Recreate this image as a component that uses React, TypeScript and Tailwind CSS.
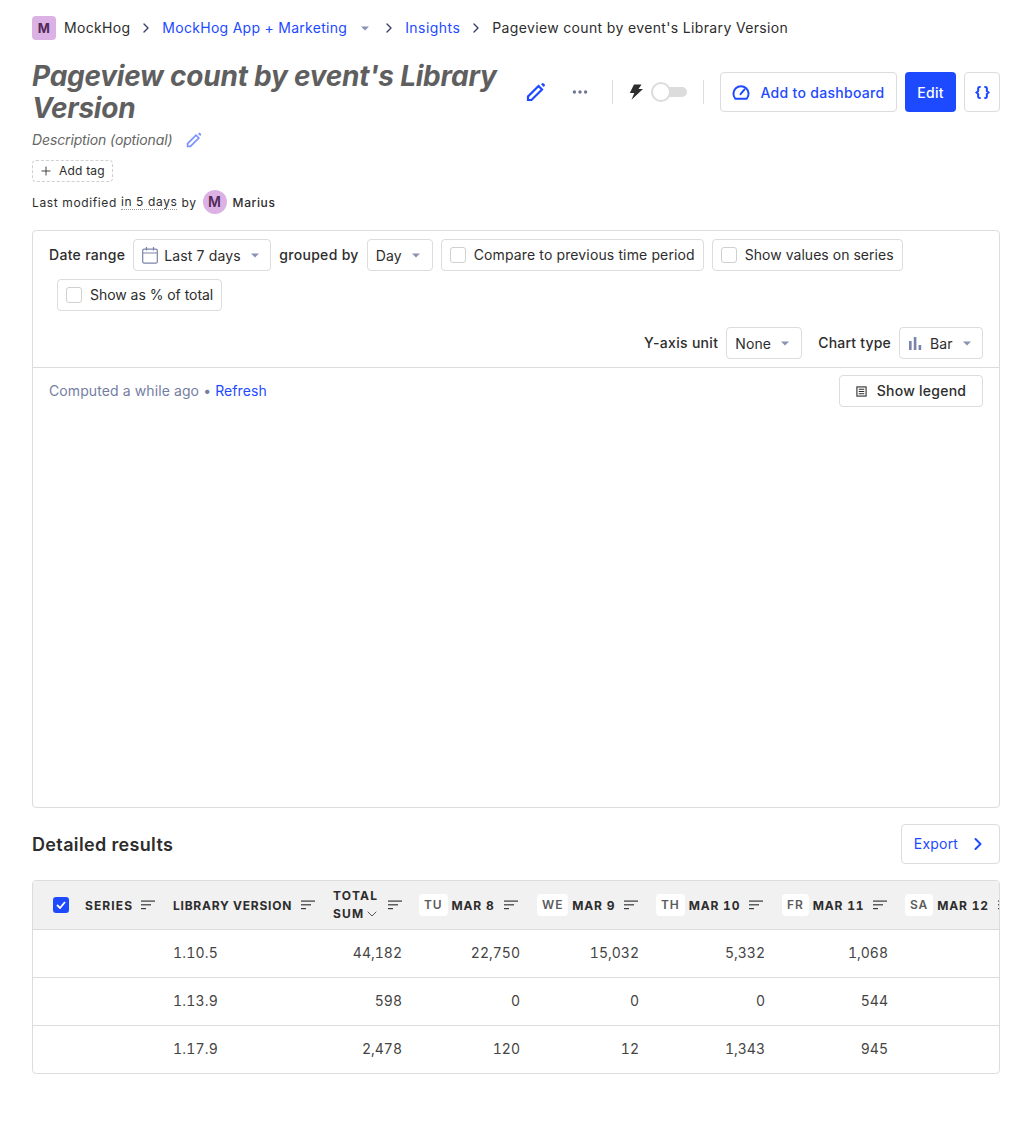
import { ChevronDown, ChevronRight, Plus } from "lucide-react";
import type { ReactNode } from "react";

const BLUE = "text-[#1d4aff]";

function Caret({ className = "" }: { className?: string }) {
  return (
    <svg viewBox="0 0 8 5" className={`h-[5px] w-2 ${className}`} fill="#8b92b0">
      <path d="M0 0.400h8L4 4.600z" />
    </svg>
  );
}

function Crumb() {
  return <ChevronRight className="size-4 text-[#35416b]" strokeWidth={2} />;
}

function EditIcon({ className = "" }: { className?: string }) {
  return (
    <svg viewBox="0 0 20 20" className={className} fill="none">
      <path
        d="M2 18v-3.500L12.500 4l3.500 3.500L5.500 18H2z"
        stroke="currentColor"
        strokeWidth="2.200"
        strokeLinejoin="miter"
      />
      <path d="M15 2.300l.9-.9a1.300 1.300 0 0 1 1.800 0l.9.9a1.300 1.300 0 0 1 0 1.800l-.9.9z" fill="currentColor" />
    </svg>
  );
}

function SortIcon() {
  return (
    <svg viewBox="0 0 14 10" className="h-[10px] w-[14px] shrink-0" fill="#3a3a3a">
      <rect x="0" y="0.5" width="14" height="1.2" />
      <rect x="0" y="4.2" width="10" height="1.2" />
      <rect x="0" y="8" width="5" height="1.2" />
    </svg>
  );
}

function Checkbox() {
  return <span className="size-4 rounded-[3px] border border-[#d0d0d0] bg-white" />;
}

function Box({ children, className = "" }: { children: ReactNode; className?: string }) {
  return (
    <div
      className={`flex h-8 items-center rounded-[4px] border border-[#dcdcdc] bg-white text-sm text-[#2d2d2d] ${className}`}
    >
      {children}
    </div>
  );
}

function CheckOption({ label, className = "" }: { label: string; className?: string }) {
  return (
    <Box className={`w-fit gap-2 pr-2 pl-2 ${className}`}>
      <Checkbox />
      <span>{label}</span>
    </Box>
  );
}

function Label({ children, className = "tracking-[0.3px]" }: { children: ReactNode; className?: string }) {
  return <span className={`text-sm font-medium text-[#2d2d2d] ${className}`}>{children}</span>;
}

function DayColumn({ day, date }: { day: string; date: string }) {
  return (
    <div className="flex items-center gap-1">
      <span className="rounded-[4px] bg-white px-[5px] py-[3px] text-xs font-semibold tracking-[0.9px] text-[#5c5c5c]">
        {day}
      </span>
      <span className="whitespace-nowrap pt-px text-xs font-bold tracking-[0.8px] tabular-nums">{date}</span>
      <span className="ml-[5px]">
        <SortIcon />
      </span>
    </div>
  );
}

const COLUMNS = "grid grid-cols-[40px_88px_160px_87px_118px_119px_126px_123px_130px]";

const ROWS = [
  ["1.10.5", "44,182", "22,750", "15,032", "5,332", "1,068"],
  ["1.13.9", "598", "0", "0", "0", "544"],
  ["1.17.9", "2,478", "120", "12", "1,343", "945"],
];

export default function App() {
  return (
    <main className="min-h-[1138px] bg-white px-8 pt-4 font-['Inter',sans-serif] text-[#2d2d2d]">
      <nav className="flex h-6 items-center text-sm tracking-[0.32px]">
        <span className="flex size-6 items-center justify-center rounded-[4px] bg-[#dcb1e3] text-[13px] font-bold text-[#4f2a5a]">
          M
        </span>
        <span className="ml-2">MockHog</span>
        <span className="mx-2">
          <Crumb />
        </span>
        <span className={`${BLUE} tracking-[0.28px]`}>MockHog App + Marketing</span>
        <Caret className="mr-[4px] ml-[14px]" />
        <span className="mx-2">
          <Crumb />
        </span>
        <span className={`${BLUE} tracking-[0.45px]`}>Insights</span>
        <span className="mx-2">
          <Crumb />
        </span>
        <span className="tracking-[0.35px]">Pageview count by event's Library Version</span>
      </nav>

      <header className="mt-5 flex items-start">
        <h1 className="w-[480px] text-[28px] leading-8 font-bold tracking-[-0.24px] text-[#5f5f5f] italic">
          Pageview count by event's Library Version
        </h1>
        <div className="mt-3 flex h-10 flex-1 items-center">
          <EditIcon className={`ml-[14px] size-5 ${BLUE}`} />
          <svg viewBox="0 0 16 4" className="ml-[26px] h-1 w-4" fill="#6f7794">
            <circle cx="2.4" cy="2" r="1.7" />
            <circle cx="8" cy="2" r="1.7" />
            <circle cx="13.6" cy="2" r="1.7" />
          </svg>
          <span className="ml-6 h-6 w-px bg-[#dcdcdc]" />
          <svg viewBox="0 0 14 16" className="ml-[16px] h-4 w-[14px]" fill="#2d2d2d">
            <path d="M5 0.500h7.500L9.500 5H14L2.500 15.800 5.300 9H0.800z" />
          </svg>
          <span className="relative ml-2 h-[10px] w-9 rounded-full bg-[#dcdcdc]">
            <span className="absolute top-1/2 left-0 size-5 -translate-y-1/2 rounded-full border-2 border-[#dcdcdc] bg-white" />
          </span>
          <span className="ml-4 h-6 w-px bg-[#dcdcdc]" />
          <button className="ml-4 flex h-10 w-[177px] items-center justify-center gap-[10px] rounded-[4px] border border-[#dcdcdc] text-sm font-medium tracking-[0.3px] text-[#1d4aff]">
            <svg viewBox="0 0 20 18" className="h-4 w-[18px]" fill="none" stroke="currentColor" strokeWidth="2.200">
              <path d="M3.500 16.500h13a8.500 8.500 0 1 0-13 0z" strokeLinejoin="round" />
              <path d="M9.500 11.500l4.500-5.500" strokeLinecap="round" />
            </svg>
            <span className="pt-px">Add to dashboard</span>
          </button>
          <button className="ml-2 flex h-10 w-[51px] items-center justify-center rounded-[4px] bg-[#1d4aff] pt-px text-sm font-medium tracking-[0.3px] text-white">
            Edit
          </button>
          <button className="ml-2 flex h-10 w-9 items-center justify-center rounded-[4px] border border-[#dcdcdc]">
            <svg viewBox="0 0 16 14" className="h-[13px] w-[15px]" fill="none" stroke="#1d4aff" strokeWidth="2.200">
              <path d="M6 1.100H4.800A1.500 1.500 0 0 0 3.300 2.600v2.900L1.500 7l1.800 1.500v2.900a1.500 1.500 0 0 0 1.500 1.500H6" />
              <path d="M10 1.100h1.200a1.500 1.500 0 0 1 1.500 1.500v2.900L14.500 7l-1.800 1.500v2.900a1.500 1.500 0 0 1-1.500 1.500H10" />
            </svg>
          </button>
        </div>
      </header>

      <div className="mt-1 flex h-6 items-center text-sm tracking-[-0.13px] text-[#666] italic">
        <span>Description (optional)</span>
        <EditIcon className="ml-[14px] size-4 text-[#7c93ff]" />
      </div>

      <div className="mt-2 flex h-[22px] w-[81px] items-center gap-[6px] rounded-[4px] border border-dashed border-[#d0d0d0] pl-[6px] text-xs tracking-[0.2px]">
        <Plus className="size-[14px]" strokeWidth={1.5} />
        Add tag
      </div>

      <div className="mt-2 flex h-6 items-center pt-px text-xs tracking-[0.62px]">
        <span>Last modified&nbsp;</span>
        <span className="border-b border-dotted border-[#999] leading-[14px]">in 5 days</span>
        <span>&nbsp;by</span>
        <span className="-mt-px mr-[6px] ml-[6px] flex size-6 items-center justify-center rounded-full bg-[#dcb1e3] text-sm font-semibold tracking-normal text-[#4f2a5a]">
          M
        </span>
        <span className="font-medium tracking-[0.6px]">Marius</span>
      </div>

      <section className="mt-4 h-[578px] rounded-[4px] border border-[#dcdcdc]">
        <div className="border-b border-[#dcdcdc] px-4 pt-2 pb-2">
          <div className="flex items-center gap-2">
            <Label>Date range</Label>
            <Box className="w-[138px] pl-2">
              <svg viewBox="0 0 16 17" className="h-[17px] w-4" fill="none" stroke="#7a84a8" strokeWidth="1.2">
                <rect x="0.7" y="2.2" width="14.6" height="14" rx="1.5" />
                <path d="M0.7 6h14.6M4.5 0v3.5M11.5 0v3.5" />
              </svg>
              <span className="ml-[6px] pt-px tracking-[0.13px]">Last 7 days</span>
              <Caret className="ml-[10px]" />
            </Box>
            <Label>grouped by</Label>
            <Box className="w-[66px] pl-2">
              <span className="pt-px tracking-[0.13px]">Day</span>
              <Caret className="ml-[10px]" />
            </Box>
            <CheckOption label="Compare to previous time period" className="tracking-[0.13px]" />
            <CheckOption label="Show values on series" className="tracking-[0.03px]" />
          </div>
          <div className="mt-2 pl-2">
            <CheckOption label="Show as % of total" className="tracking-[-0.04px]" />
          </div>
          <div className="mt-4 flex items-center justify-end gap-2">
            <Label>Y-axis unit</Label>
            <Box className="w-[76px] pl-2">
              <span className="pt-px tracking-[0.13px]">None</span>
              <Caret className="ml-[10px]" />
            </Box>
            <Label className="ml-2 tracking-[0.2px]">Chart type</Label>
            <Box className="w-[84px] pl-2">
              <svg viewBox="0 0 14 14" className="size-[14px]" fill="#7a84a8">
                <rect x="1" y="5" width="2.6" height="9" />
                <rect x="5.8" y="1" width="2.6" height="13" />
                <rect x="10.6" y="9" width="2.6" height="5" />
              </svg>
              <span className="ml-2 pt-px tracking-[0.13px]">Bar</span>
              <Caret className="ml-[10px]" />
            </Box>
          </div>
        </div>
        <div className="flex items-center justify-between px-4 pt-[7px]">
          <p className="text-sm tracking-[0.1px] text-[#747ea2]">
            Computed a while ago • <span className={BLUE}>Refresh</span>
          </p>
          <Box className="w-[144px] justify-center gap-[10px] font-medium tracking-[0.25px]">
            <svg viewBox="0 0 12 12" className="size-[11px]" fill="none" stroke="#2d2d2d" strokeWidth="1.200">
              <rect x="1" y="1" width="10" height="10" />
              <path d="M3 3.500h6M3 6h6M3 8.500h6" />
            </svg>
            Show legend
          </Box>
        </div>
      </section>

      <div className="mt-4 flex h-10 items-center justify-between">
        <h2 className="pt-px text-lg font-semibold tracking-[0.35px]">Detailed results</h2>
        <button className="flex h-10 w-[99px] items-center justify-center gap-[10px] rounded-[4px] border border-[#dcdcdc] text-sm tracking-[0.2px] text-[#1d4aff]">
          Export
          <ChevronRight className="-mr-px size-5" strokeWidth={2.4} />
        </button>
      </div>

      <section className="mt-4 overflow-hidden rounded-[4px] border border-[#dcdcdc]">
        <div className="w-[1100px]">
          <div className={`${COLUMNS} h-[49px] items-center border-b border-[#dcdcdc] bg-[#f1f1f1] text-xs font-bold`}>
            <div className="pl-5">
              <span className="flex size-4 items-center justify-center rounded-[3px] bg-[#1d4aff]">
                <svg viewBox="0 0 10 8" className="h-2 w-[10px]" fill="none" stroke="white" strokeWidth="1.8">
                  <path d="M1 4l3 3 5-6" />
                </svg>
              </span>
            </div>
            <div className="flex items-center gap-2 pl-3 tracking-[1.1px]">
              <span className="pt-px">SERIES</span>
              <SortIcon />
            </div>
            <div className="flex items-center gap-[9px] pl-3 tracking-[0.75px]">
              <span className="pt-px">LIBRARY VERSION</span>
              <SortIcon />
            </div>
            <div className="flex items-center gap-2 pl-3 tracking-[1.2px]">
              <div className="leading-[18px]">
                TOTAL
                <div className="flex h-[18px] items-center">
                  SUM
                  <ChevronDown className="size-4" strokeWidth={1.2} />
                </div>
              </div>
              <SortIcon />
            </div>
            <div className="pl-[11px]">
              <DayColumn day="TU" date="MAR 8" />
            </div>
            <div className="pl-[11px]">
              <DayColumn day="WE" date="MAR 9" />
            </div>
            <div className="pl-[11px]">
              <DayColumn day="TH" date="MAR 10" />
            </div>
            <div className="pl-[11px]">
              <DayColumn day="FR" date="MAR 11" />
            </div>
            <div className="pl-[11px]">
              <DayColumn day="SA" date="MAR 12" />
            </div>
          </div>
          {ROWS.map((row, i) => (
            <div
              key={row[0]}
              className={`${COLUMNS} items-center pb-px text-sm text-[#444] tabular-nums ${i < 2 ? "h-12 border-b border-[#dcdcdc]" : "h-[47px]"}`}
            >
              <div />
              <div />
              <div className="pl-3 tracking-[0.2px]">{row[0]}</div>
              {row.slice(1).map((value, j) => (
                <div key={j} className="pr-[6px] text-right">
                  {value}
                </div>
              ))}
            </div>
          ))}
        </div>
      </section>
    </main>
  );
}
